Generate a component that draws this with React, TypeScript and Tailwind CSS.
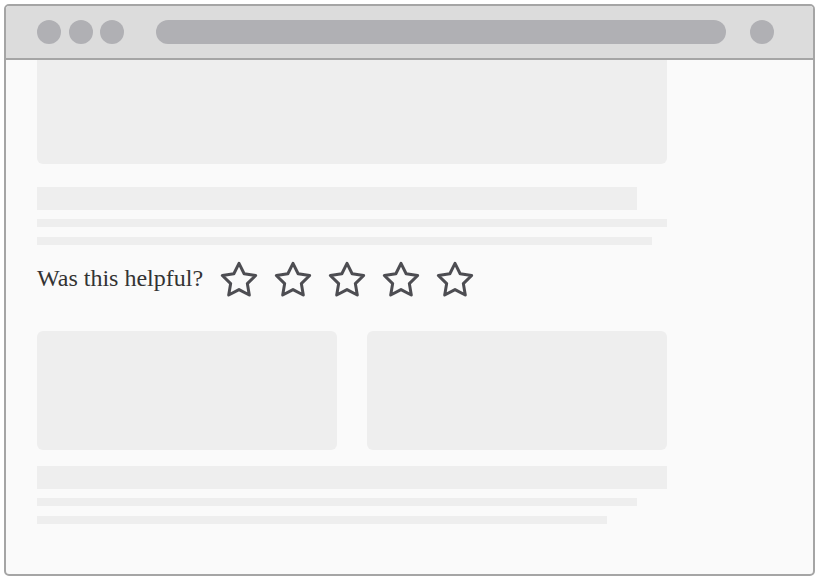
import React from "react";

function StarIcon() {
  return (
    <svg width="40" height="40" viewBox="0 0 24 24" className="shrink-0">
      <polygon
        points="12,2 15.09,8.26 22,9.27 17,14.14 18.18,21.02 12,17.77 5.82,21.02 7,14.14 2,9.27 8.91,8.26"
        fill="none"
        stroke="#4d4d52"
        strokeWidth="1.8"
        strokeLinejoin="round"
      />
    </svg>
  );
}

export default function App() {
  return (
    <div className="w-[817px] h-[577px] bg-white pt-[4px] pl-[4px]">
      <div className="w-[811px] h-[572px] border-2 border-[#a5a5a5] rounded-[5px] overflow-hidden flex flex-col bg-[#fafafa]">
        {/* browser chrome */}
        <div className="h-[54px] shrink-0 bg-[#dcdcdc] border-b-2 border-[#a5a5a5] flex items-center pl-[31px] pr-[39px] pb-[1px]">
          <div className="flex gap-[7.5px]">
            <div className="w-6 h-6 rounded-full bg-[#b0b0b4]" />
            <div className="w-6 h-6 rounded-full bg-[#b0b0b4]" />
            <div className="w-6 h-6 rounded-full bg-[#b0b0b4]" />
          </div>
          <div className="ml-8 flex-1 h-6 rounded-full bg-[#b0b0b4]" />
          <div className="ml-6 w-6 h-6 rounded-full bg-[#b0b0b4]" />
        </div>

        {/* page */}
        <div className="flex-1 pl-[31px]">
          <div className="w-[630px]">
            <div className="h-[104px] rounded-b-md bg-[#eeeeee]" />
            <div className="mt-[23px] h-[23px] w-[600px] bg-[#eeeeee]" />
            <div className="mt-[9px] h-[8px] w-[630px] bg-[#eeeeee]" />
            <div className="mt-[10px] h-[8px] w-[615px] bg-[#eeeeee]" />

            <div className="mt-[15px] flex items-center">
              <span className="text-[24px] leading-none text-[#333333] -mt-[4px] mr-[16px]" style={{ fontFamily: '"Liberation Serif", "Times New Roman", serif' }}>
                Was this helpful?
              </span>
              <div className="flex gap-[14px]">
                <StarIcon />
                <StarIcon />
                <StarIcon />
                <StarIcon />
                <StarIcon />
              </div>
            </div>

            <div className="mt-[31px] grid grid-cols-2 gap-[30px]">
              <div className="h-[119px] rounded-md bg-[#eeeeee]" />
              <div className="h-[119px] rounded-md bg-[#eeeeee]" />
            </div>
            <div className="mt-[16px] h-[23px] w-[630px] bg-[#eeeeee]" />
            <div className="mt-[9px] h-[8px] w-[600px] bg-[#eeeeee]" />
            <div className="mt-[10px] h-[8px] w-[570px] bg-[#eeeeee]" />
          </div>
        </div>
      </div>
    </div>
  );
}
